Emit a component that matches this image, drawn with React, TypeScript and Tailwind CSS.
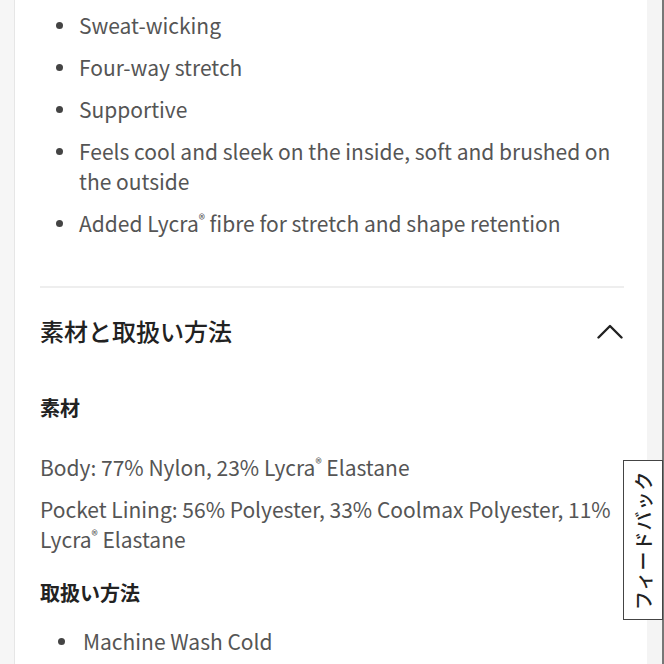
const features = [
  'Sweat-wicking',
  'Four-way stretch',
  'Supportive',
  'Feels cool and sleek on the inside, soft and brushed on the outside',
];

function Lycra() {
  return (
    <>
      Lycra<sup className="text-[13px] -top-[0.6em]">®</sup>
    </>
  );
}

function Bullet({ w }: { w: string }) {
  return (
    <span className={`flex ${w} shrink-0 justify-center pt-[12px]`}>
      <span className="h-[7px] w-[7px] rounded-full bg-[#444]" />
    </span>
  );
}

export default function App() {
  return (
    <div
      className="relative flex h-[664px] w-[664px] overflow-hidden bg-[#f6f6f6]"
      style={{ fontFamily: '"Noto Sans CJK JP", "Source Sans Pro", sans-serif' }}
    >
      <div className="w-[14px] shrink-0" />
      <div className="w-[633px] shrink-0 border-l border-[#e6e6e6] bg-white pl-[25px] pr-[23px]">
        <ul className="mt-[10px] flex flex-col gap-[12px] text-[21px] leading-[30px] text-[#555]">
          {features.map((f) => (
            <li key={f} className="flex">
              <Bullet w="w-[39px]" />
              <span>{f}</span>
            </li>
          ))}
          <li className="flex">
            <Bullet w="w-[39px]" />
            <span>
              Added <Lycra /> fibre for stretch and shape retention
            </span>
          </li>
        </ul>

        <div className="mt-[48px] h-[2px] bg-[#eeeeee]" />

        <div className="mt-[28px] flex items-center justify-between">
          <h2 className="text-[24px] font-medium leading-[30px] text-[#222]">素材と取扱い方法</h2>
          <svg width="26" height="15" viewBox="0 0 26 15" className="mr-[1px]" fill="none">
            <polyline points="1.5,13.5 13,2 24.5,13.5" stroke="#222" strokeWidth="2.4" strokeLinecap="round" strokeLinejoin="round" />
          </svg>
        </div>

        <h3 className="mt-[47px] text-[20px] font-bold leading-[30px] text-[#222]">素材</h3>

        <p className="mt-[29px] text-[21px] leading-[30px] text-[#555]">
          Body: 77% Nylon, 23% <Lycra /> Elastane
        </p>
        <p className="mt-[12px] text-[21px] leading-[30px] text-[#555]">
          Pocket Lining: 56% Polyester, 33% Coolmax Polyester, 11% <Lycra /> Elastane
        </p>

        <h3 className="mt-[24px] text-[20px] font-bold leading-[30px] text-[#222]">取扱い方法</h3>

        <ul className="mt-[18px] text-[21px] leading-[30px] text-[#555]">
          <li className="flex">
            <Bullet w="w-[43px]" />
            <span>Machine Wash Cold</span>
          </li>
        </ul>
      </div>
      <div className="flex-1 border-r-2 border-[#777] bg-[#f4f4f4]" />

      <div className="absolute right-[1px] top-[460px] flex h-[160px] w-[40px] items-center justify-center border-[1.5px] border-[#444] bg-white">
        <span className="-rotate-90 whitespace-nowrap text-[19px] font-medium tracking-[1px] text-[#222]">フィードバック</span>
      </div>
    </div>
  );
}
